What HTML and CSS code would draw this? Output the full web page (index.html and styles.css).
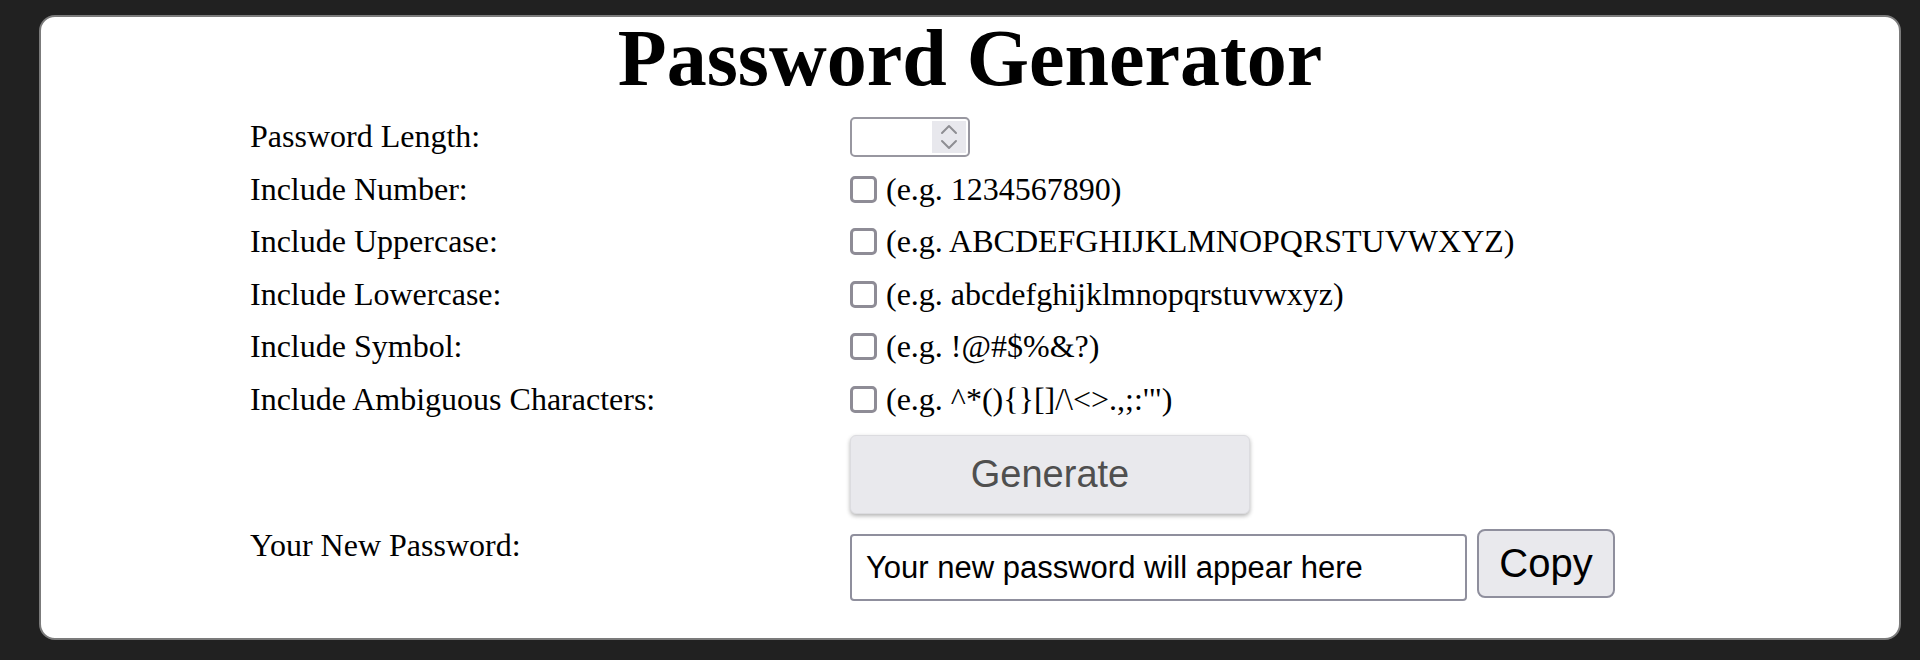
FILE: index.html
```html
<!DOCTYPE html>
<html lang="en">
<head>
<meta charset="UTF-8">
<meta name="viewport" content="width=device-width, initial-scale=1.0">
<title>Password Generator</title>
<link rel="stylesheet" href="styles.css">
</head>
<body>
<div class="container">
  <h1>Password Generator</h1>

  <div class="options">
    <label for="length">Password Length:</label>
    <div class="field">
      <div class="number-box">
        <input type="text" id="length" class="number-input">
        <span class="spinner">
          <svg width="18" height="26" viewBox="0 0 18 26">
            <path d="M2 9 L9 2 L16 9" fill="none" stroke="#8e8e93" stroke-width="2" stroke-linecap="round" stroke-linejoin="round"/>
            <path d="M2 17 L9 24 L16 17" fill="none" stroke="#8e8e93" stroke-width="2" stroke-linecap="round" stroke-linejoin="round"/>
          </svg>
        </span>
      </div>
    </div>

    <label>Include Number:</label>
    <label class="field">
      <input type="checkbox" id="numbers" class="check-input">
      <span class="check"></span>
      <span>(e.g. 1234567890)</span>
    </label>

    <label>Include Uppercase:</label>
    <label class="field">
      <input type="checkbox" id="uppercase" class="check-input">
      <span class="check"></span>
      <span>(e.g. ABCDEFGHIJKLMNOPQRSTUVWXYZ)</span>
    </label>

    <label>Include Lowercase:</label>
    <label class="field">
      <input type="checkbox" id="lowercase" class="check-input">
      <span class="check"></span>
      <span>(e.g. abcdefghijklmnopqrstuvwxyz)</span>
    </label>

    <label>Include Symbol:</label>
    <label class="field">
      <input type="checkbox" id="symbols" class="check-input">
      <span class="check"></span>
      <span>(e.g. !@#$%&amp;?)</span>
    </label>

    <label>Include Ambiguous Characters:</label>
    <label class="field">
      <input type="checkbox" id="ambiguous" class="check-input">
      <span class="check"></span>
      <span>(e.g. ^*(){}[]/\&lt;&gt;.,;:'")</span>
    </label>
  </div>

  <div class="actions">
    <button type="button" id="generateButton" class="generate-btn">Generate</button>
  </div>

  <div class="result">
    <label for="output" class="result-label">Your New Password:</label>
    <input type="text" id="output" class="output" value="Your new password will appear here" readonly>
    <button type="button" id="copyButton" class="copy-btn">Copy</button>
  </div>
</div>
</body>
</html>
```

FILE: styles.css
```css
/* Password Generator Page Styles */
body {
  font-family: "Liberation Serif", "Times New Roman", serif;
  margin: 0;
  padding: 15px 19px 0 39px;
  background-color: #212121;
  color: #000;
}

.container {
  box-sizing: border-box;
  height: 625px;
  background-color: white;
  border: 2px solid #7b7b7b;
  border-radius: 16px;
  padding-top: 1px;
}

h1 {
  margin: 0;
  font-size: 80px;
  line-height: 80px;
  font-weight: bold;
  text-align: center;
}

/* label / field rows */
.options {
  display: grid;
  grid-template-columns: 600px auto;
  grid-auto-rows: 40px;
  row-gap: 12.5px;
  margin: 18.5px 0 0 209px;
  font-size: 32px;
}

.options label {
  display: flex;
  align-items: center;
}

.field {
  display: flex;
  align-items: center;
}

/* real checkbox is hidden, the span draws the box */
.check-input {
  display: none;
}

.check {
  box-sizing: border-box;
  width: 27px;
  height: 27px;
  margin-right: 9px;
  border: 3px solid #8e8c96;
  border-radius: 5px;
  background: white;
}

.number-box {
  box-sizing: border-box;
  display: flex;
  align-items: center;
  width: 120px;
  height: 40px;
  border: 2px solid #9897a0;
  border-radius: 5px;
  padding: 0 2px 0 0;
}

.number-input {
  border: none;
  outline: none;
  width: 76px;
  height: 30px;
  padding: 0 0 0 4px;
  font-size: 26px;
  background: transparent;
}

.spinner {
  display: flex;
  align-items: center;
  justify-content: center;
  width: 36px;
  height: 32px;
  background-color: #e8e8ed;
}

/* Generate button */
.actions {
  margin: 16px 0 0 809px;
}

.generate-btn {
  box-sizing: border-box;
  width: 400px;
  height: 79px;
  font-family: "Liberation Sans", Arial, sans-serif;
  font-size: 38px;
  color: #4f4f4f;
  background-color: #e9e9ed;
  border: 1px solid #dcdce0;
  border-radius: 6px;
  box-shadow: 0 2px 4px rgba(0, 0, 0, 0.3);
  cursor: pointer;
}

/* result row */
.result {
  display: flex;
  align-items: flex-start;
  margin: 15px 0 0 209px;
}

.result-label {
  width: 600px;
  font-size: 32px;
  line-height: 32px;
}

.output {
  box-sizing: border-box;
  width: 617px;
  height: 67px;
  margin: 5px 10px 0 0;
  padding: 0 14px;
  font-family: "Liberation Sans", Arial, sans-serif;
  font-size: 31px;
  color: #000;
  border: 2px solid #8f8f9d;
  border-radius: 4px;
  outline: none;
}

.copy-btn {
  box-sizing: border-box;
  width: 138px;
  height: 69px;
  font-family: "Liberation Sans", Arial, sans-serif;
  font-size: 40px;
  color: #000;
  background-color: #e9e9ed;
  border: 2px solid #8f8f9d;
  border-radius: 8px;
  cursor: pointer;
}
```
